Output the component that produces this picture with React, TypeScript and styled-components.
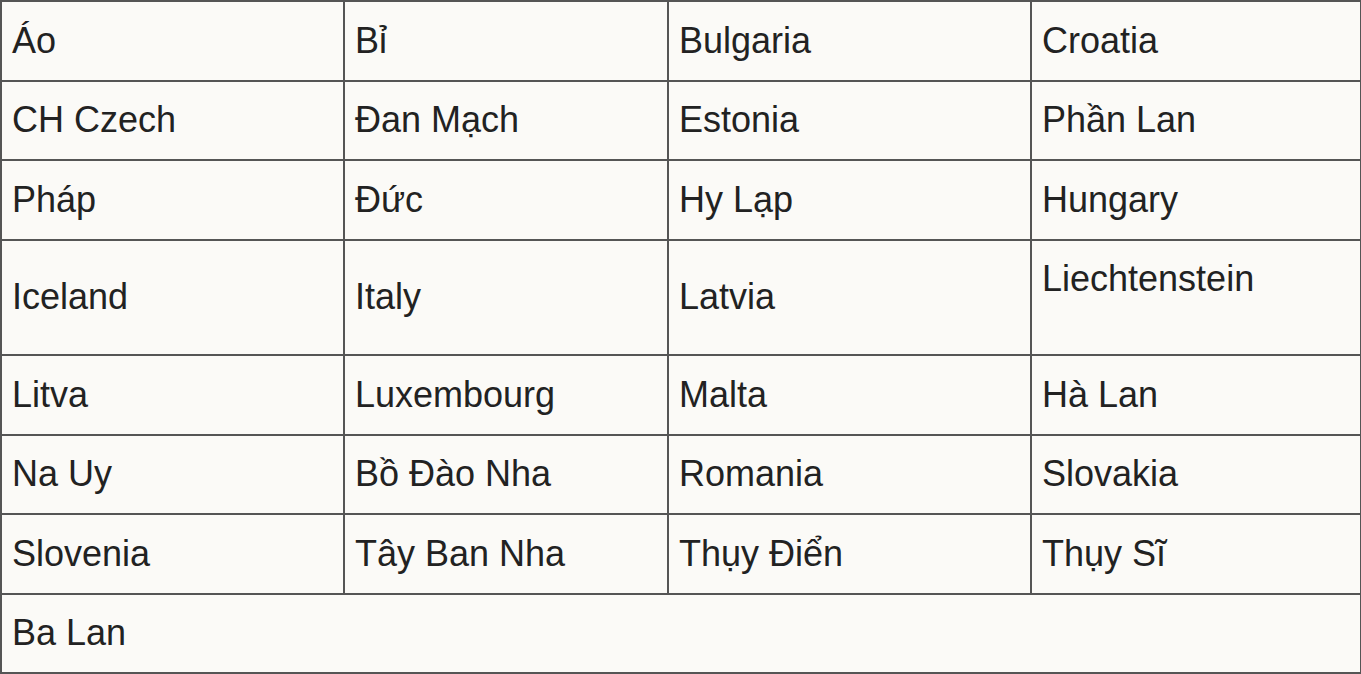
import React from "react";
import styled, { createGlobalStyle } from "styled-components";

const GlobalStyle = createGlobalStyle`
  html, body {
    margin: 0;
    padding: 0;
    background: #fbfaf7;
  }
  body {
    font-family: "Liberation Sans", Arial, sans-serif;
    color: #222222;
  }
`;

const Table = styled.table`
  border-collapse: collapse;
  table-layout: fixed;
  width: 1360px;
  margin: 0;
  font-family: "Liberation Sans", Arial, sans-serif;
  font-size: 36px;
  line-height: 36px;
  color: #222222;
`;

const Col = styled.col<{ $w: number }>`
  width: ${(p) => p.$w}px;
`;

const Cell = styled.td<{ $top?: boolean }>`
  border: 2px solid #555555;
  padding: 20.75px 9px 20.75px 10px;
  vertical-align: ${(p) => (p.$top ? "top" : "middle")};
  text-align: left;
`;

type CellData = { text: string; extra?: boolean };

const rows: CellData[][] = [
  [{ text: "Áo" }, { text: "Bỉ" }, { text: "Bulgaria" }, { text: "Croatia" }],
  [{ text: "CH Czech" }, { text: "Đan Mạch" }, { text: "Estonia" }, { text: "Phần Lan" }],
  [{ text: "Pháp" }, { text: "Đức" }, { text: "Hy Lạp" }, { text: "Hungary" }],
  [{ text: "Iceland" }, { text: "Italy" }, { text: "Latvia" }, { text: "Liechtenstein", extra: true }],
  [{ text: "Litva" }, { text: "Luxembourg" }, { text: "Malta" }, { text: "Hà Lan" }],
  [{ text: "Na Uy" }, { text: "Bồ Đào Nha" }, { text: "Romania" }, { text: "Slovakia" }],
  [{ text: "Slovenia" }, { text: "Tây Ban Nha" }, { text: "Thụy Điển" }, { text: "Thụy Sĩ" }],
];

export default function App() {
  return (
    <>
      <GlobalStyle />
      <Table>
        <colgroup>
          <Col $w={343} />
          <Col $w={324} />
          <Col $w={363} />
          <Col $w={330} />
        </colgroup>
        <tbody>
          {rows.map((row, i) => (
            <tr key={i}>
              {row.map((c, j) => (
                <Cell key={j} $top={c.extra}>
                  {c.text}
                  {c.extra && (
                    <>
                      <br />
                      {"\u00a0"}
                    </>
                  )}
                </Cell>
              ))}
            </tr>
          ))}
          <tr>
            <Cell colSpan={4}>Ba Lan</Cell>
          </tr>
        </tbody>
      </Table>
    </>
  );
}
